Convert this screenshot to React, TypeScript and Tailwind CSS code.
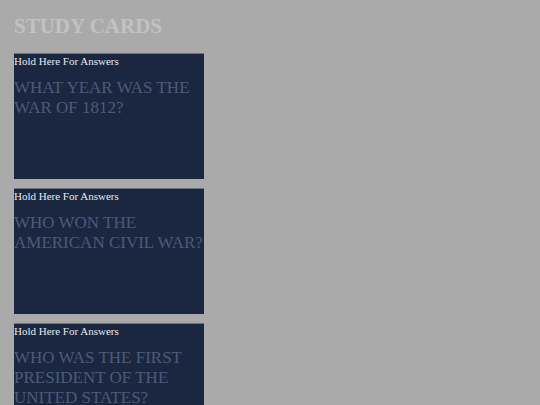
const cards = [
  "What year was the War of 1812?",
  "Who won the American Civil War?",
  "Who was the first President of the United States?",
];

export default function App() {
  return (
    <div className="min-h-[405px] bg-[#aaaaaa] px-[14px] pt-[13px] font-['Liberation_Serif',serif]">
      <h1 className="text-[21px] font-bold leading-[26px] text-[#c2c2c2]">STUDY CARDS</h1>
      <div className="mt-[14px] flex flex-col gap-[9px]">
        {cards.map((q) => (
          <div key={q} className="h-[126px] w-[190px] border-t border-[#6b7385] bg-[#1b2741]">
            <div className="pt-[1px] text-[11px] leading-[13px] text-[#e6e8ec]">Hold Here For Answers</div>
            <div className="mt-[10px] text-[17px] leading-[20px] uppercase text-[#4c5a78]">{q}</div>
          </div>
        ))}
      </div>
    </div>
  );
}
